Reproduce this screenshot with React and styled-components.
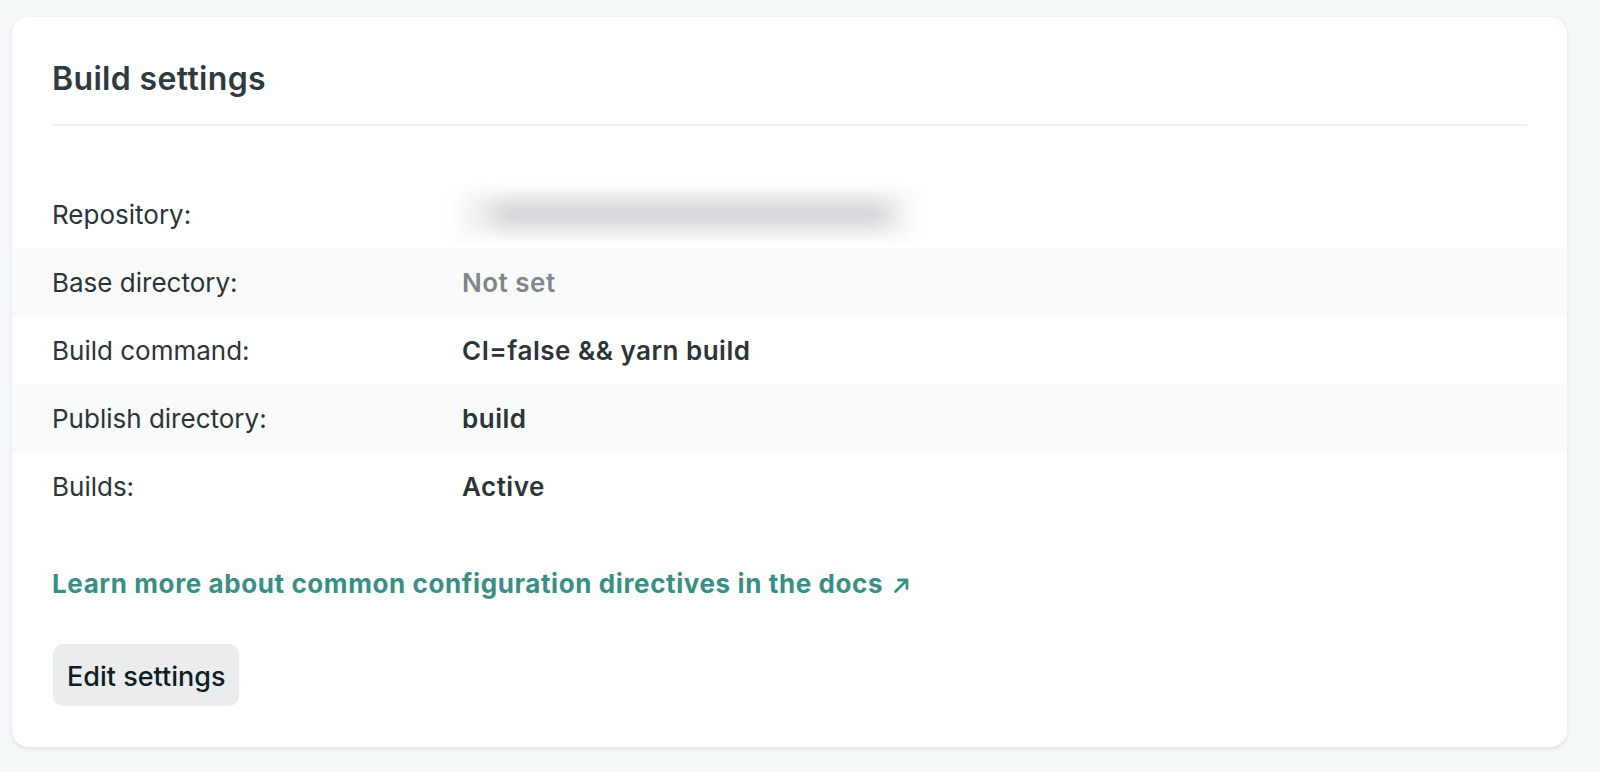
import React from "react";
import styled, { createGlobalStyle } from "styled-components";

const GlobalStyle = createGlobalStyle`
  html, body {
    margin: 0;
    padding: 0;
    background: #f6f9f9;
  }
  body {
    font-family: Inter, "Noto Sans", "Liberation Sans", sans-serif;
    -webkit-font-smoothing: antialiased;
  }
`;

const Page = styled.div`
  padding: 17px 33px 25px 12px;
  min-height: 772px;
  box-sizing: border-box;
`;

const Card = styled.section`
  background: #ffffff;
  border-radius: 16px;
  box-shadow: 0 2px 4px rgba(14, 30, 37, 0.1), 0 0 1px rgba(14, 30, 37, 0.06);
  padding: 42px 0 41px;
  box-sizing: border-box;
`;

const Header = styled.header`
  margin: 0 40px;
  padding-bottom: 25px;
  border-bottom: 2px solid #f1f2f2;
`;

const Title = styled.h2`
  margin: 0;
  font-size: 32px;
  line-height: 40px;
  font-weight: 600;
  color: #2e3a40;
  letter-spacing: 0.35px;
`;

const Rows = styled.dl`
  margin: 54px 0 0;
  padding: 0;
`;

const Row = styled.div`
  display: grid;
  grid-template-columns: 410px 1fr;
  align-items: center;
  height: 68px;
  padding: 3px 40px 1px;
  box-sizing: border-box;
  background: ${(p) => (p.$striped ? "#f9fafa" : "transparent")};
`;

const Label = styled.dt`
  margin: 0;
  font-size: 26px;
  line-height: 64px;
  font-weight: 400;
  color: #2b3438;
`;

const Value = styled.dd`
  margin: 0;
  font-size: 26px;
  line-height: 64px;
  font-weight: 600;
  letter-spacing: 0.5px;
  color: ${(p) => (p.$muted ? "#7e878b" : "#2b3438")};
`;

const BlurBox = styled.div`
  width: 488px;
  height: 62px;
  margin: -3px 0 0 -22px;
  overflow: hidden;
  display: flex;
  align-items: center;
`;

const BlurHalo = styled.div`
  flex: 1;
  height: 44px;
  margin: 0 16px 0 20px;
  padding: 0 22px 0 30px;
  display: flex;
  align-items: center;
  background: #f2f2f3;
  filter: blur(10px);
`;

const BlurBar = styled.div`
  flex: 1;
  height: 24px;
  border-radius: 12px;
  background: #cfd1d4;
`;

const LinkLine = styled.div`
  margin: 48px 40px 0;
`;

const DocsLink = styled.a`
  display: inline-flex;
  align-items: center;
  gap: 10px;
  font-size: 26px;
  line-height: 32px;
  font-weight: 700;
  color: #3a8f84;
  text-decoration: none;
  letter-spacing: 0.6px;
`;

const ArrowIcon = styled.svg`
  width: 17px;
  height: 17px;
  flex: none;
  margin-top: 2px;
`;

const Actions = styled.div`
  margin: 44px 40px 0 41px;
`;

const Button = styled.button`
  height: 62px;
  padding: 3px 13px 0 14px;
  border: none;
  border-radius: 10px;
  background: #ebeced;
  color: #0e1e25;
  font-family: inherit;
  font-size: 27px;
  font-weight: 500;
  line-height: 59px;
  cursor: pointer;
`;

const settings = [
  { label: "Repository:", blurred: true },
  { label: "Base directory:", value: "Not set", muted: true },
  { label: "Build command:", value: "CI=false && yarn build" },
  { label: "Publish directory:", value: "build" },
  { label: "Builds:", value: "Active" },
];

export default function App() {
  return (
    <>
      <GlobalStyle />
      <Page>
        <Card>
          <Header>
            <Title>Build settings</Title>
          </Header>
          <Rows>
            {settings.map((s, i) => (
              <Row key={s.label} $striped={i % 2 === 1}>
                <Label>{s.label}</Label>
                {s.blurred ? (
                  <Value as="div">
                    <BlurBox aria-hidden="true">
                      <BlurHalo>
                        <BlurBar />
                      </BlurHalo>
                    </BlurBox>
                  </Value>
                ) : (
                  <Value $muted={s.muted}>{s.value}</Value>
                )}
              </Row>
            ))}
          </Rows>
          <LinkLine>
            <DocsLink href="#">
              Learn more about common configuration directives in the docs
              <ArrowIcon viewBox="0 0 17 17" fill="none">
                <path
                  d="M2.5 14.5 L14 3 M5.5 3 H14 V11.5"
                  stroke="#3a8f84"
                  strokeWidth="2.8"
                  strokeLinecap="round"
                  strokeLinejoin="round"
                />
              </ArrowIcon>
            </DocsLink>
          </LinkLine>
          <Actions>
            <Button type="button">Edit settings</Button>
          </Actions>
        </Card>
      </Page>
    </>
  );
}
